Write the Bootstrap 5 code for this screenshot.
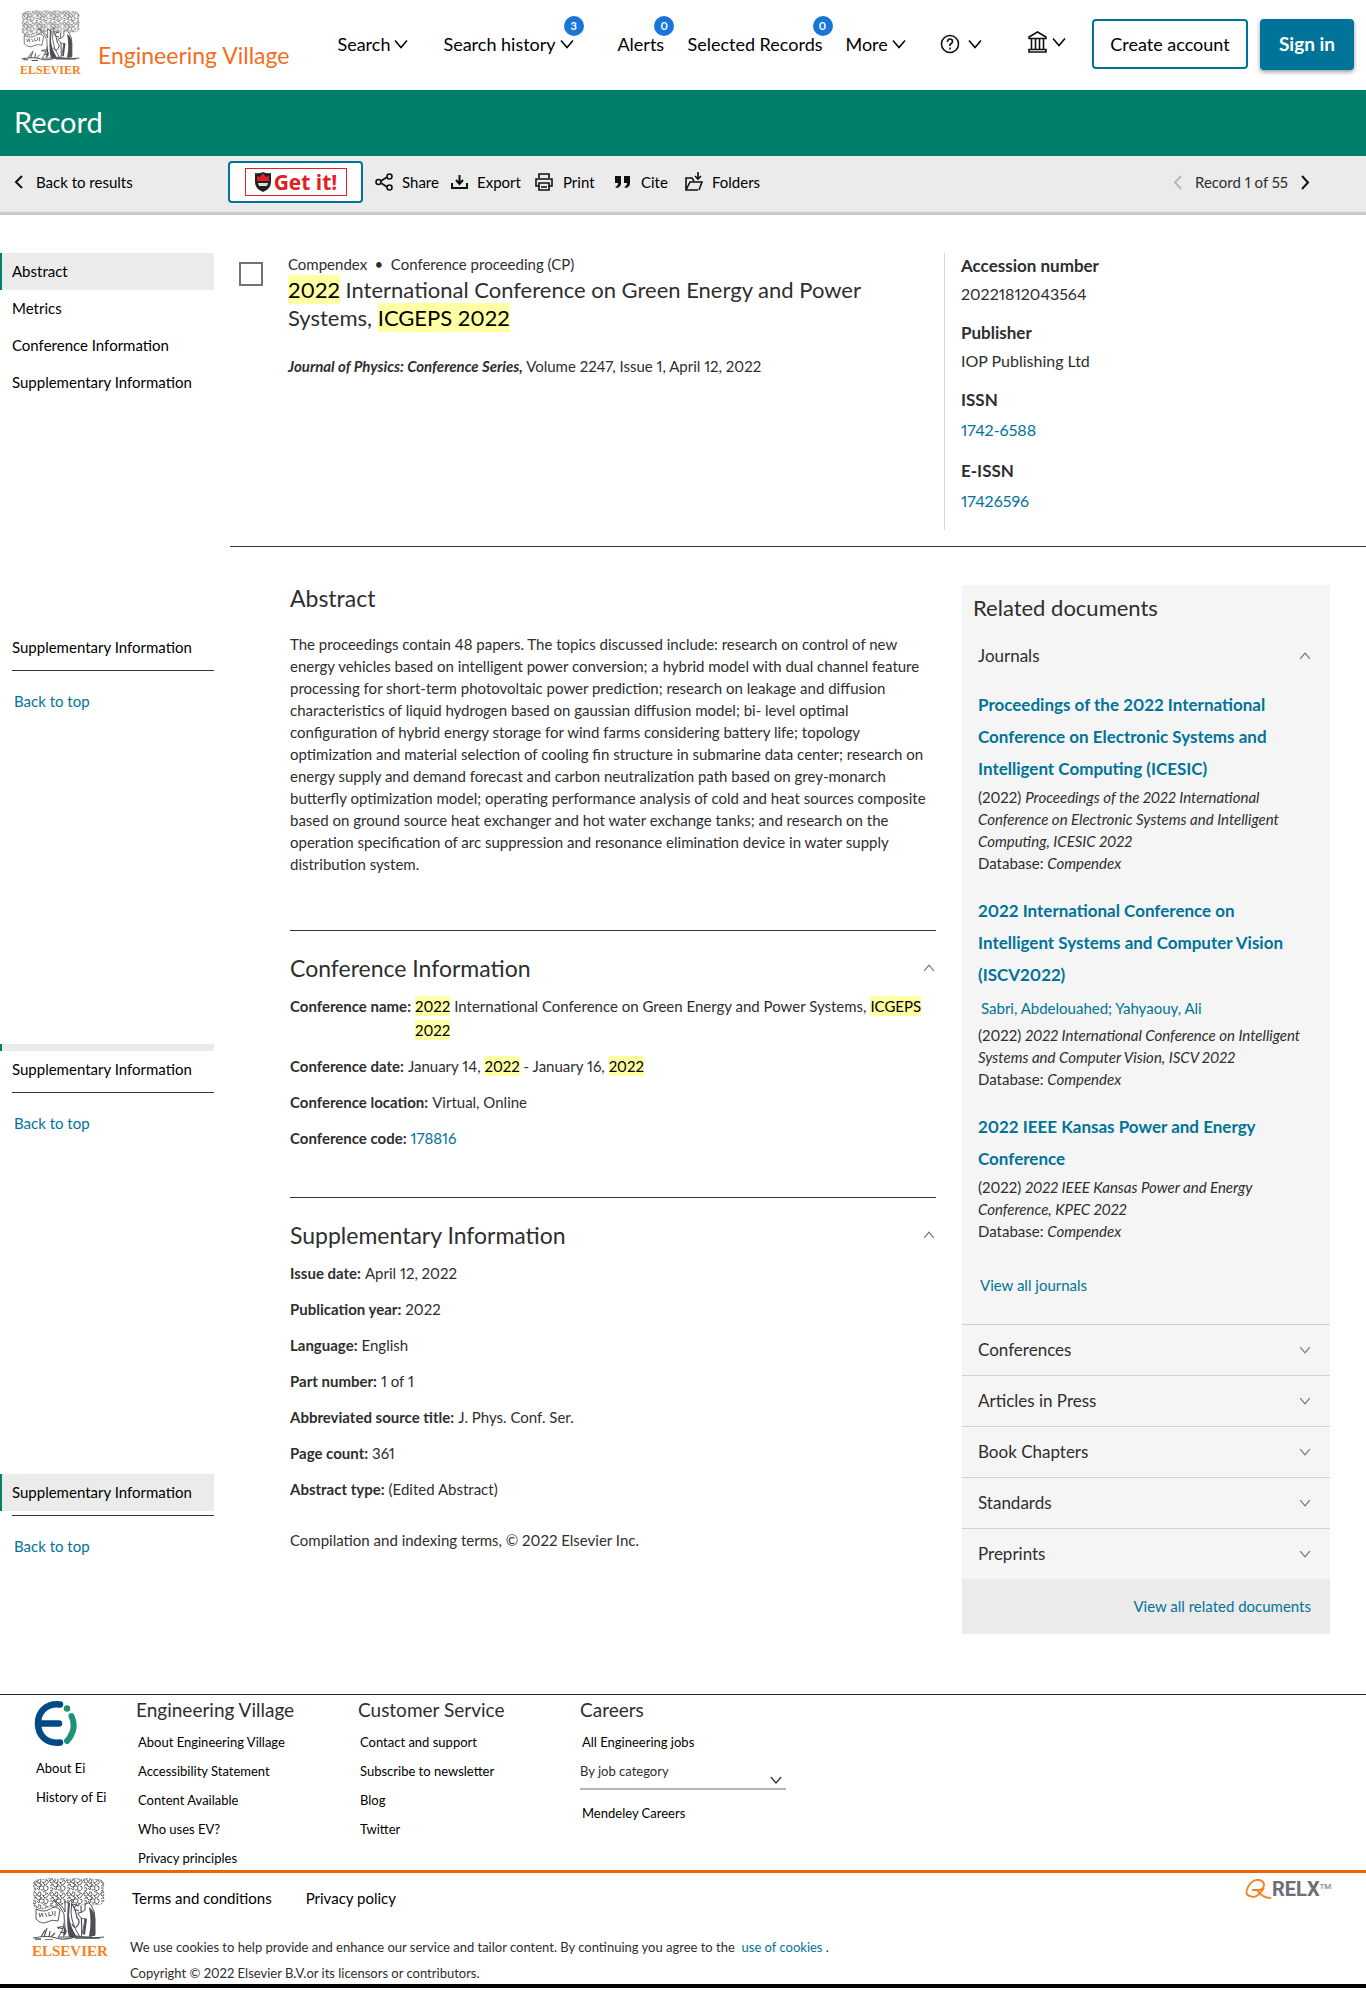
<!DOCTYPE html>
<html lang="en">
<head>
<meta charset="utf-8">
<meta name="viewport" content="width=device-width, initial-scale=1">
<title>Engineering Village - Record</title>
<link href="https://cdn.jsdelivr.net/npm/bootstrap@5.3.0/dist/css/bootstrap.min.css" rel="stylesheet">
<style>
body{font-family:Lato,"Open Sans",sans-serif;font-size:15px;line-height:22px;color:#2e2e2e;background:#fff;font-variant-numeric:proportional-nums}
a{color:#007398;text-decoration:none}
svg{display:block;flex:none}
h1,h2,h3,p,dl,dd,ul{margin:0;padding:0}
.ico{fill:none;stroke:#111;stroke-width:2}
.thin{fill:none;stroke:#111;stroke-width:1.600}
.topbar{height:90px;padding:0 12px 2px 20px}
.brand-name{font-size:23px;line-height:28px;color:#f36d21;margin:22px 0 0 16px}
.topnav{flex:1;margin-left:48px}
.topnav a{font-size:18px;line-height:24px;color:#000;white-space:nowrap;position:relative}
.topnav .nv{display:flex;align-items:center;gap:4px}
.count{position:absolute;top:-16px;width:20px;height:20px;right:-10px;border-radius:50%;background:#1976d8;color:#fff;font-size:11px;font-weight:700;line-height:20px;text-align:center}
.n1{width:106px}.n2{width:174px}.n3{width:70px}.n4{width:158px}.n5{width:95px}.n6{width:87px}
.btn-out{border:2px solid #007398;border-radius:4px;background:#fff;color:#000;font-size:18px;line-height:24px;width:156px;height:50px;padding:0}
.btn-in{border:0;border-radius:4px;background:#007398;color:#fff;font-size:19px;font-weight:700;line-height:24px;width:94px;height:51px;padding:0;box-shadow:0 2px 4px #0006}
.titlebar{background:#007f6a;color:#fff;height:66px;padding:0 14px 2px}
.titlebar h1{font-size:29px;line-height:36px;font-weight:400}
.tools{background:#ebebeb;height:59px;border-bottom:3px solid #c9c9c9;padding-bottom:4px}
.tools a{color:#000;display:flex;align-items:center;gap:9px;white-space:nowrap}
.tback{width:228px;padding-left:14px}
.getit{width:135px;height:42px;border:2px solid #007398;border-radius:4px;background:#fff;padding:0;margin-right:12px}
.getit span{border:1px solid #e02027;color:#e02027;font:700 21px/24px "Open Sans",sans-serif;width:102px;height:28px;gap:2px}
.t1{width:76px}.t2{width:83px}.t3{width:80px}.t4{width:71px}
.pager{margin-left:auto;margin-right:56px;gap:13px}
.side{width:214px;flex:none}
.side a{display:block;line-height:36px;height:37px;padding-left:12px;color:#000}
.side .on{background:#ebebeb;border-left:2px solid #007f6a;padding-left:10px}
.side hr,.sep{margin:0;border:0;border-top:1px solid #333;opacity:1}
.side hr{margin-left:12px}
.side a.totop{color:#007398;padding-left:14px;margin-top:12px}
.strip{height:7px;background:#ebebeb;border-left:2px solid #007f6a}
.g1{padding-top:82px}.g2{padding-top:324px}.g3{padding-top:332px}
.hero{padding-top:38px}
.form-check-input.chk{width:24px;height:24px;border:2px solid #737373;border-radius:0;margin:9px 25px 0 25px;flex:none}
.hl{background:#ffffa3;color:#000;padding:1px 0}
.rec{font-size:22px;line-height:28px;font-weight:400;padding-top:1px}
.srcline{margin-top:23px}
.ids{width:422px;flex:none;border-left:1px solid #d8d8d8;padding:1px 0 0 16px;min-height:277px;font-size:17px;line-height:24px}
.ids dt{font-weight:700}
.ids dd{padding:4px 0 15px;font-size:16px}
.ids dd.lk{padding:6px 0 17px}
.ids dd:last-child{padding-bottom:0}
.herorule{margin:16px 0 0 230px}
.sect{font-size:23px;line-height:28px;font-weight:400}
.sect-row{padding:23px 0 12px}
.art{flex:1;min-width:0;margin-left:76px;margin-right:26px;padding-top:37px}
.abs-text{padding:21px 0 55px}
.fld{line-height:24px;margin-bottom:12px;display:flex;gap:4px}
.fld b{white-space:nowrap}
.sep2{margin-top:47px}
.rel{width:368px;flex:none;margin-right:36px;margin-top:38px;background:#f5f5f5}
.rel-head{font-size:22px;line-height:28px;padding:9px 11px 0;font-weight:400}
.rowbtn{display:flex;justify-content:space-between;align-items:center;width:100%;border:0;border-top:1px solid #d0d0d0;background:transparent;height:51px;padding:0 18px 0 16px;font-size:17px;line-height:24px;color:#2e2e2e}
.rel-body{padding:8px 16px 0}
.jl{display:block;font-size:17px;line-height:32px;font-weight:700;margin-bottom:1px}
.jt{margin-bottom:21px}
.jauth{display:block;padding:5px 0 5px 3px}
.jall{display:block;padding:11px 0 28px 2px}
.rel-foot{background:#ebebeb;height:55px;line-height:54px;text-align:right;padding-right:19px}
.foot{margin-top:60px;border-top:1px solid #222;height:179px;border-bottom:3px solid #eb6500;font-size:13px}
.foot a{color:#000;display:block;line-height:28px;padding-left:2px;height:29px}
.foot h3{font-size:19px;line-height:24px;font-weight:400;margin:3px 0 6px}
.fc0{width:136px;padding:6px 0 0 34px}
.fc{width:222px}
.catbox{width:206px;margin-bottom:9px}
.catsel{width:100%;height:33px;border:0;border-bottom:2px solid #b5b5b5;background:#fff;appearance:none;padding:0 0 4px;color:#2e2e2e;font-size:13px;display:block}
.catsel+svg{position:absolute;right:4px;top:18px}
.legal{height:115px;border-bottom:4px solid #000;padding:5px 32px 0}
.terms{padding:9px 0 25px 2px;gap:34px}
.cookie{font-size:13px;line-height:26px}
</style>
</head>
<body>
<svg width="0" height="0" class="position-absolute" aria-hidden="true">
  <defs>
    <pattern id="leaf" width="17" height="13" patternUnits="userSpaceOnUse">
      <path d="M0 3q2-4 4-1t-2 3q-2-1 0-3M6 1q3-1 3 2t-3 2q-2-2 1-3M1 8q2-3 4 0t4-2M8 12q-2-3 1-4t3 2-3 2M3 6l2 1M11 1q4-1 3 2t-4 1M15 2q3 2 0 4t-3 2M14 8q3 0 2 3t-4 1M1 10q3-1 3 1t-3 2M5 10l2 2M11 5l2 2M10 7l-3-2" fill="none" stroke="#4c4f53" stroke-width=".9"/>
    </pattern>
    <symbol id="tree" viewBox="0 0 73 62">
      <path fill="url(#leaf)" stroke="#6a6d70" stroke-width=".8" stroke-dasharray="2 1" d="M2 4q5-4 11-2 6-3 12 0 6-3 12 0 7-3 13 0 6-3 11 0 9-2 11 4-2 5 0 9-1 4 0 8-3 5-9 3-5 3-10 0-6 3-11-2-4 4-10 1-8 5-14 3-8 5-15 1-3-4 0-9-3-4 0-8-2-4-1-8z"/>
      <path d="M4 31q8 4 14 0t10 1l-2 11q-6-2-11 1t-11-3z" fill="#fff" stroke="#55585c"/>
      <path d="M7 35l1 4 2-4 1 4m2-4 2 4m2-5v4l3-1m0-4 1 4m2-4v5" fill="none" stroke="#4c4f53" stroke-width=".9"/>
      <path d="M21 22q10 5 12 12V23l3 2 4-4-1 14q1 12 9 24H26q8-8 6-23-3-8-11-14z" fill="#fff" stroke="#4c4f53"/>
      <path d="M36 24l2 1-1 12q1 12 8 22h-8q-3-10-1-35zM33 42l1 14-3 3z" fill="#4c4f53"/>
      <path d="M40 26q4 6 5 13m0-13-3 4m-1-4 6 2m-5 3 5 2m-3 6q5 3 2 8t-6-1m9-18 1 31" fill="none" stroke="#4c4f53" stroke-width="1.200"/>
      <path d="M53 27q4-5 7 2 3 4 3 12v16q-6 3-14 2 3-8 4-18-5 0-7-6 4 0 7-3z" fill="#fff" stroke="#4c4f53"/>
      <path d="M57 29q6 4 6 12v17h-6q3-14 0-29zM53 40l-2 16 2 1 2-16z" fill="#4c4f53"/>
      <path d="M1 60q14-3 23 0t21-2q14 3 27 1M9 59l4-7m-1 7 3-9m2 9 1-6m1 6 4-4m3-4q3-5 7 0t-5 3m-3-5 6 2" fill="none" stroke="#4c4f53" stroke-width="1.200"/>
      <path d="M43 60h25M3 61h6m4 1h8" stroke="#4c4f53" stroke-width="1.500"/>
    </symbol>
    <symbol id="down" viewBox="0 0 14 10"><path d="M1 1.500l6 7 6-7" fill="none" stroke="currentColor" stroke-width="1.500"/></symbol>
    <symbol id="up" viewBox="0 0 14 10"><path d="M1 8.500l6-7 6 7" fill="none" stroke="currentColor" stroke-width="1.500"/></symbol>
  </defs>
</svg>

<header class="topbar d-flex align-items-center">
  <svg width="62" height="70" viewBox="0 0 62 70" role="img" aria-label="Elsevier"><use href="#tree" x="1" y="1" width="59" height="51"/><text x="0" y="65" font-family="Liberation Serif, serif" font-size="12" font-weight="700" fill="#f58220">ELSEVIER</text></svg>
  <a class="brand-name text-nowrap" href="#">Engineering Village</a>
  <nav class="topnav d-flex align-items-center">
    <div class="n1"><a class="nv" href="#">Search<svg width="14" height="10"><use href="#down"/></svg></a></div>
    <div class="n2 d-flex"><a class="nv" href="#">Search history<svg width="14" height="10"><use href="#down"/></svg><span class="count">3</span></a></div>
    <div class="n3 d-flex"><a href="#">Alerts<span class="count">0</span></a></div>
    <div class="n4 d-flex"><a href="#">Selected Records<span class="count">0</span></a></div>
    <div class="n5"><a class="nv" href="#">More<svg width="14" height="10"><use href="#down"/></svg></a></div>
    <div class="n6"><a class="nv" href="#" aria-label="Help"><svg class="me-1" width="20" height="20" viewBox="0 0 20 20"><circle cx="10" cy="10" r="8.500" class="thin"/><path d="M7.500 8q0-3 2.500-3t2.500 2.500q0 1.500-2.500 3v1.500M10 13.500v2" class="thin"/></svg><svg width="14" height="10"><use href="#down"/></svg></a></div>
    <div class="pb-1"><a class="nv" href="#" aria-label="Institution"><svg width="21" height="22" viewBox="0 0 21 22"><path class="thin" d="M2 7.500V6l8.500-5L19 6v1.500zM4.500 8v10M8.500 8v10M12.500 8v10M16.500 8v10M2 18.500h17v2.500H2z"/></svg><svg width="14" height="10"><use href="#down"/></svg></a></div>
  </nav>
  <button class="btn-out me-2" type="button">Create account</button>
  <button class="btn-in ms-1" type="button">Sign in</button>
</header>

<div class="titlebar d-flex align-items-center"><h1>Record</h1></div>

<div class="tools d-flex align-items-center">
  <div class="tback"><a href="#"><svg width="13" height="14" viewBox="0 0 13 14"><path class="ico" d="M8 1 2 7l6 6"/></svg>Back to results</a></div>
  <button class="getit d-flex align-items-center justify-content-center" type="button"><span class="d-flex align-items-center justify-content-center"><svg width="18" height="22" viewBox="0 0 18 22"><path d="M1 2q4 1 8-1 4 2 8 1v9q0 7-8 10Q1 18 1 11z" fill="#222"/><path d="M3 5l3 1 3-4 3 4 3-1v5H3z" fill="#e02027"/><path d="M4 12h10l-1 3H5z" fill="#ddd"/></svg>Get it!</span></button>
  <a class="t1" href="#"><svg width="18" height="18" viewBox="0 0 18 18"><path class="thin" d="M6 8l6-4M6 10l6 4"/><circle cx="3.500" cy="9" r="2.500" class="thin"/><circle cx="14.500" cy="3.500" r="2.500" class="thin"/><circle cx="14.500" cy="14.500" r="2.500" class="thin"/></svg>Share</a>
  <a class="t2" href="#"><svg width="17" height="16" viewBox="0 0 17 16"><path class="ico" d="M1 9v5h15V9M8.500 1v9M5 6l3.500 4L12 6"/></svg>Export</a>
  <a class="t3" href="#"><svg width="20" height="20" viewBox="0 0 20 20"><path class="thin" d="M5 6V2h10v4M5 14H2V7h16v7h-3M5 11h10v7H5zM7 15h6"/></svg>Print</a>
  <a class="t4" href="#"><svg width="18" height="14" viewBox="0 0 18 14"><path d="M1 1h6v7q0 4-4 5l-2-1q3-1 3-4H1zM10 1h6v7q0 4-4 5l-2-1q3-1 3-4h-3z" fill="#111"/></svg>Cite</a>
  <a href="#"><svg width="18" height="20" viewBox="0 0 18 20"><path class="thin" d="M13 18H1V6h6l2 3M1 18l4-8h12l-3 8M13 0v7M10 4l3 3 3-3"/></svg>Folders</a>
  <div class="pager d-flex align-items-center"><svg width="9" height="15" viewBox="0 0 9 15"><path d="M8 1 2 7.500 8 14" fill="none" stroke="#b9b9b9" stroke-width="2"/></svg><span>Record 1 of 55</span><svg width="9" height="15" viewBox="0 0 9 15"><path class="ico" d="M1 1l6 6.500L1 14"/></svg></div>
</div>

<section class="hero">
  <div class="d-flex">
    <nav class="side"><a class="on" href="#">Abstract</a><a href="#">Metrics</a><a href="#">Conference Information</a><a href="#">Supplementary Information</a></nav>
    <input type="checkbox" class="chk form-check-input" aria-label="Select record">
    <div class="flex-fill pe-5">
      <div>Compendex&ensp;•&ensp;Conference proceeding (CP)</div>
      <h2 class="rec"><mark class="hl">2022</mark> International Conference on Green Energy and Power Systems, <mark class="hl">ICGEPS 2022</mark></h2>
      <p class="srcline"><b><i>Journal of Physics: Conference Series,</i></b> Volume 2247, Issue 1, April 12, 2022</p>
    </div>
    <dl class="ids"><dt>Accession number</dt><dd>20221812043564</dd><dt>Publisher</dt><dd>IOP Publishing Ltd</dd><dt>ISSN</dt><dd class="lk"><a href="#">1742-6588</a></dd><dt>E-ISSN</dt><dd class="lk"><a href="#">17426596</a></dd></dl>
  </div>
  <hr class="sep herorule">
</section>

<div class="d-flex align-items-start">
  <nav class="side">
    <div class="g1"><a href="#">Supplementary Information</a><hr class="mt-1"><a class="totop" href="#">Back to top</a></div>
    <div class="g2"><div class="strip"></div><a href="#">Supplementary Information</a><hr class="mt-1"><a class="totop" href="#">Back to top</a></div>
    <div class="g3"><a class="on" href="#">Supplementary Information</a><hr class="mt-1"><a class="totop" href="#">Back to top</a></div>
  </nav>
  <main class="art">
    <h2 class="sect">Abstract</h2>
    <p class="abs-text">The proceedings contain 48 papers. The topics discussed include: research on control of new energy vehicles based on intelligent power conversion; a hybrid model with dual channel feature processing for short-term photovoltaic power prediction; research on leakage and diffusion characteristics of liquid hydrogen based on gaussian diffusion model; bi- level optimal configuration of hybrid energy storage for wind farms considering battery life; topology optimization and material selection of cooling fin structure in submarine data center; research on energy supply and demand forecast and carbon neutralization path based on grey-monarch butterfly optimization model; operating performance analysis of cold and heat sources composite based on ground source heat exchanger and hot water exchange tanks; and research on the operation specification of arc suppression and resonance elimination device in water supply distribution system.</p>
    <hr class="sep">
    <div class="sect-row d-flex justify-content-between align-items-center"><h2 class="sect">Conference Information</h2><svg class="text-secondary" width="14" height="8"><use href="#up"/></svg></div>
    <div class="fld"><b>Conference name:</b><span><mark class="hl">2022</mark> International Conference on Green Energy and Power Systems, <mark class="hl">ICGEPS</mark> <mark class="hl">2022</mark></span></div>
    <div class="fld"><b>Conference date:</b><span>January 14, <mark class="hl">2022</mark> - January 16, <mark class="hl">2022</mark></span></div>
    <div class="fld"><b>Conference location:</b><span>Virtual, Online</span></div>
    <div class="fld"><b>Conference code:</b><a href="#">178816</a></div>
    <hr class="sep sep2">
    <div class="sect-row d-flex justify-content-between align-items-center"><h2 class="sect">Supplementary Information</h2><svg class="text-secondary" width="14" height="8"><use href="#up"/></svg></div>
    <div class="fld"><b>Issue date:</b><span>April 12, 2022</span></div>
    <div class="fld"><b>Publication year:</b><span>2022</span></div>
    <div class="fld"><b>Language:</b><span>English</span></div>
    <div class="fld"><b>Part number:</b><span>1 of 1</span></div>
    <div class="fld"><b>Abbreviated source title:</b><span>J. Phys. Conf. Ser.</span></div>
    <div class="fld"><b>Page count:</b><span>361</span></div>
    <div class="fld"><b>Abstract type:</b><span>(Edited Abstract)</span></div>
    <p class="pt-3">Compilation and indexing terms, © 2022 Elsevier Inc.</p>
  </main>
  <aside class="rel">
    <h2 class="rel-head">Related documents</h2>
    <button class="rowbtn border-top-0 mt-2" type="button">Journals<svg class="text-secondary" width="14" height="8"><use href="#up"/></svg></button>
    <div class="rel-body">
      <div class="jt"><a class="jl" href="#">Proceedings of the 2022 International Conference on Electronic Systems and Intelligent Computing (ICESIC)</a>(2022) <i>Proceedings of the 2022 International Conference on Electronic Systems and Intelligent Computing, ICESIC 2022</i><br>Database: <i>Compendex</i></div>
      <div class="jt"><a class="jl" href="#">2022 International Conference on Intelligent Systems and Computer Vision (ISCV2022)</a><a class="jauth" href="#">Sabri, Abdelouahed; Yahyaouy, Ali</a>(2022) <i>2022 International Conference on Intelligent Systems and Computer Vision, ISCV 2022</i><br>Database: <i>Compendex</i></div>
      <div class="jt"><a class="jl" href="#">2022 IEEE Kansas Power and Energy Conference</a>(2022) <i>2022 IEEE Kansas Power and Energy Conference, KPEC 2022</i><br>Database: <i>Compendex</i></div>
      <a class="jall" href="#">View all journals</a>
    </div>
    <button class="rowbtn" type="button">Conferences<svg class="text-secondary" width="14" height="8"><use href="#down"/></svg></button>
    <button class="rowbtn" type="button">Articles in Press<svg class="text-secondary" width="14" height="8"><use href="#down"/></svg></button>
    <button class="rowbtn" type="button">Book Chapters<svg class="text-secondary" width="14" height="8"><use href="#down"/></svg></button>
    <button class="rowbtn" type="button">Standards<svg class="text-secondary" width="14" height="8"><use href="#down"/></svg></button>
    <button class="rowbtn" type="button">Preprints<svg class="text-secondary" width="14" height="8"><use href="#down"/></svg></button>
    <div class="rel-foot"><a href="#">View all related documents</a></div>
  </aside>
</div>

<footer>
  <div class="foot d-flex">
    <div class="fc0"><svg class="mb-2" width="44" height="45" viewBox="0 0 44 45"><path d="M26 3.500C12 2 4 11 4 22.500S12 43 26 41.500M5 22.500h20" fill="none" stroke="#004b87" stroke-width="6.500" stroke-linecap="round"/><path d="M37.500 15q6 13-4.500 25" fill="none" stroke="#1d9078" stroke-width="6" stroke-linecap="round"/><circle cx="33" cy="7.500" r="3.200" fill="#1d9078"/></svg><a href="#">About Ei</a><a href="#">History of Ei</a></div>
    <div class="fc"><h3>Engineering Village</h3><a href="#">About Engineering Village</a><a href="#">Accessibility Statement</a><a href="#">Content Available</a><a href="#">Who uses EV?</a><a href="#">Privacy principles</a></div>
    <div class="fc"><h3>Customer Service</h3><a href="#">Contact and support</a><a href="#">Subscribe to newsletter</a><a href="#">Blog</a><a href="#">Twitter</a></div>
    <div class="fc"><h3>Careers</h3><a href="#">All Engineering jobs</a><div class="catbox position-relative"><select class="catsel" aria-label="By job category"><option>By job category</option></select><svg width="12" height="10"><use href="#down"/></svg></div><a href="#">Mendeley Careers</a></div>
  </div>
  <div class="legal d-flex">
    <svg width="78" height="84" viewBox="0 0 78 84" role="img" aria-label="Elsevier"><use href="#tree" width="73" height="62"/><text x="0" y="78" font-family="Liberation Serif, serif" font-size="15" font-weight="700" fill="#f58220">ELSEVIER</text></svg>
    <div class="ps-3 ms-1">
      <div class="terms d-flex"><a class="text-black" href="#">Terms and conditions</a><a class="text-black" href="#">Privacy policy</a></div>
      <p class="cookie">We use cookies to help provide and enhance our service and tailor content. By continuing you agree to the <a href="#">&nbsp;use of cookies</a> .<br>Copyright © 2022 Elsevier B.V.or its licensors or contributors.</p>
    </div>
    <svg class="ms-auto" width="90" height="24" viewBox="0 0 90 24"><path d="M8 12h7q5-1 5-5t-5-5Q8 1 4 9t2 9q6 4 14-8M13 12q5 8 14 8" fill="none" stroke="#f58220" stroke-width="1.800"/><text x="28" y="18" font-family="Roboto, sans-serif" font-size="20" font-weight="700" fill="#6b6e72">RELX<tspan font-size="8" dy="-7" font-weight="400">TM</tspan></text></svg>
  </div>
</footer>
<script src="https://cdn.jsdelivr.net/npm/bootstrap@5.3.0/dist/js/bootstrap.bundle.min.js"></script>
</body>
</html>
